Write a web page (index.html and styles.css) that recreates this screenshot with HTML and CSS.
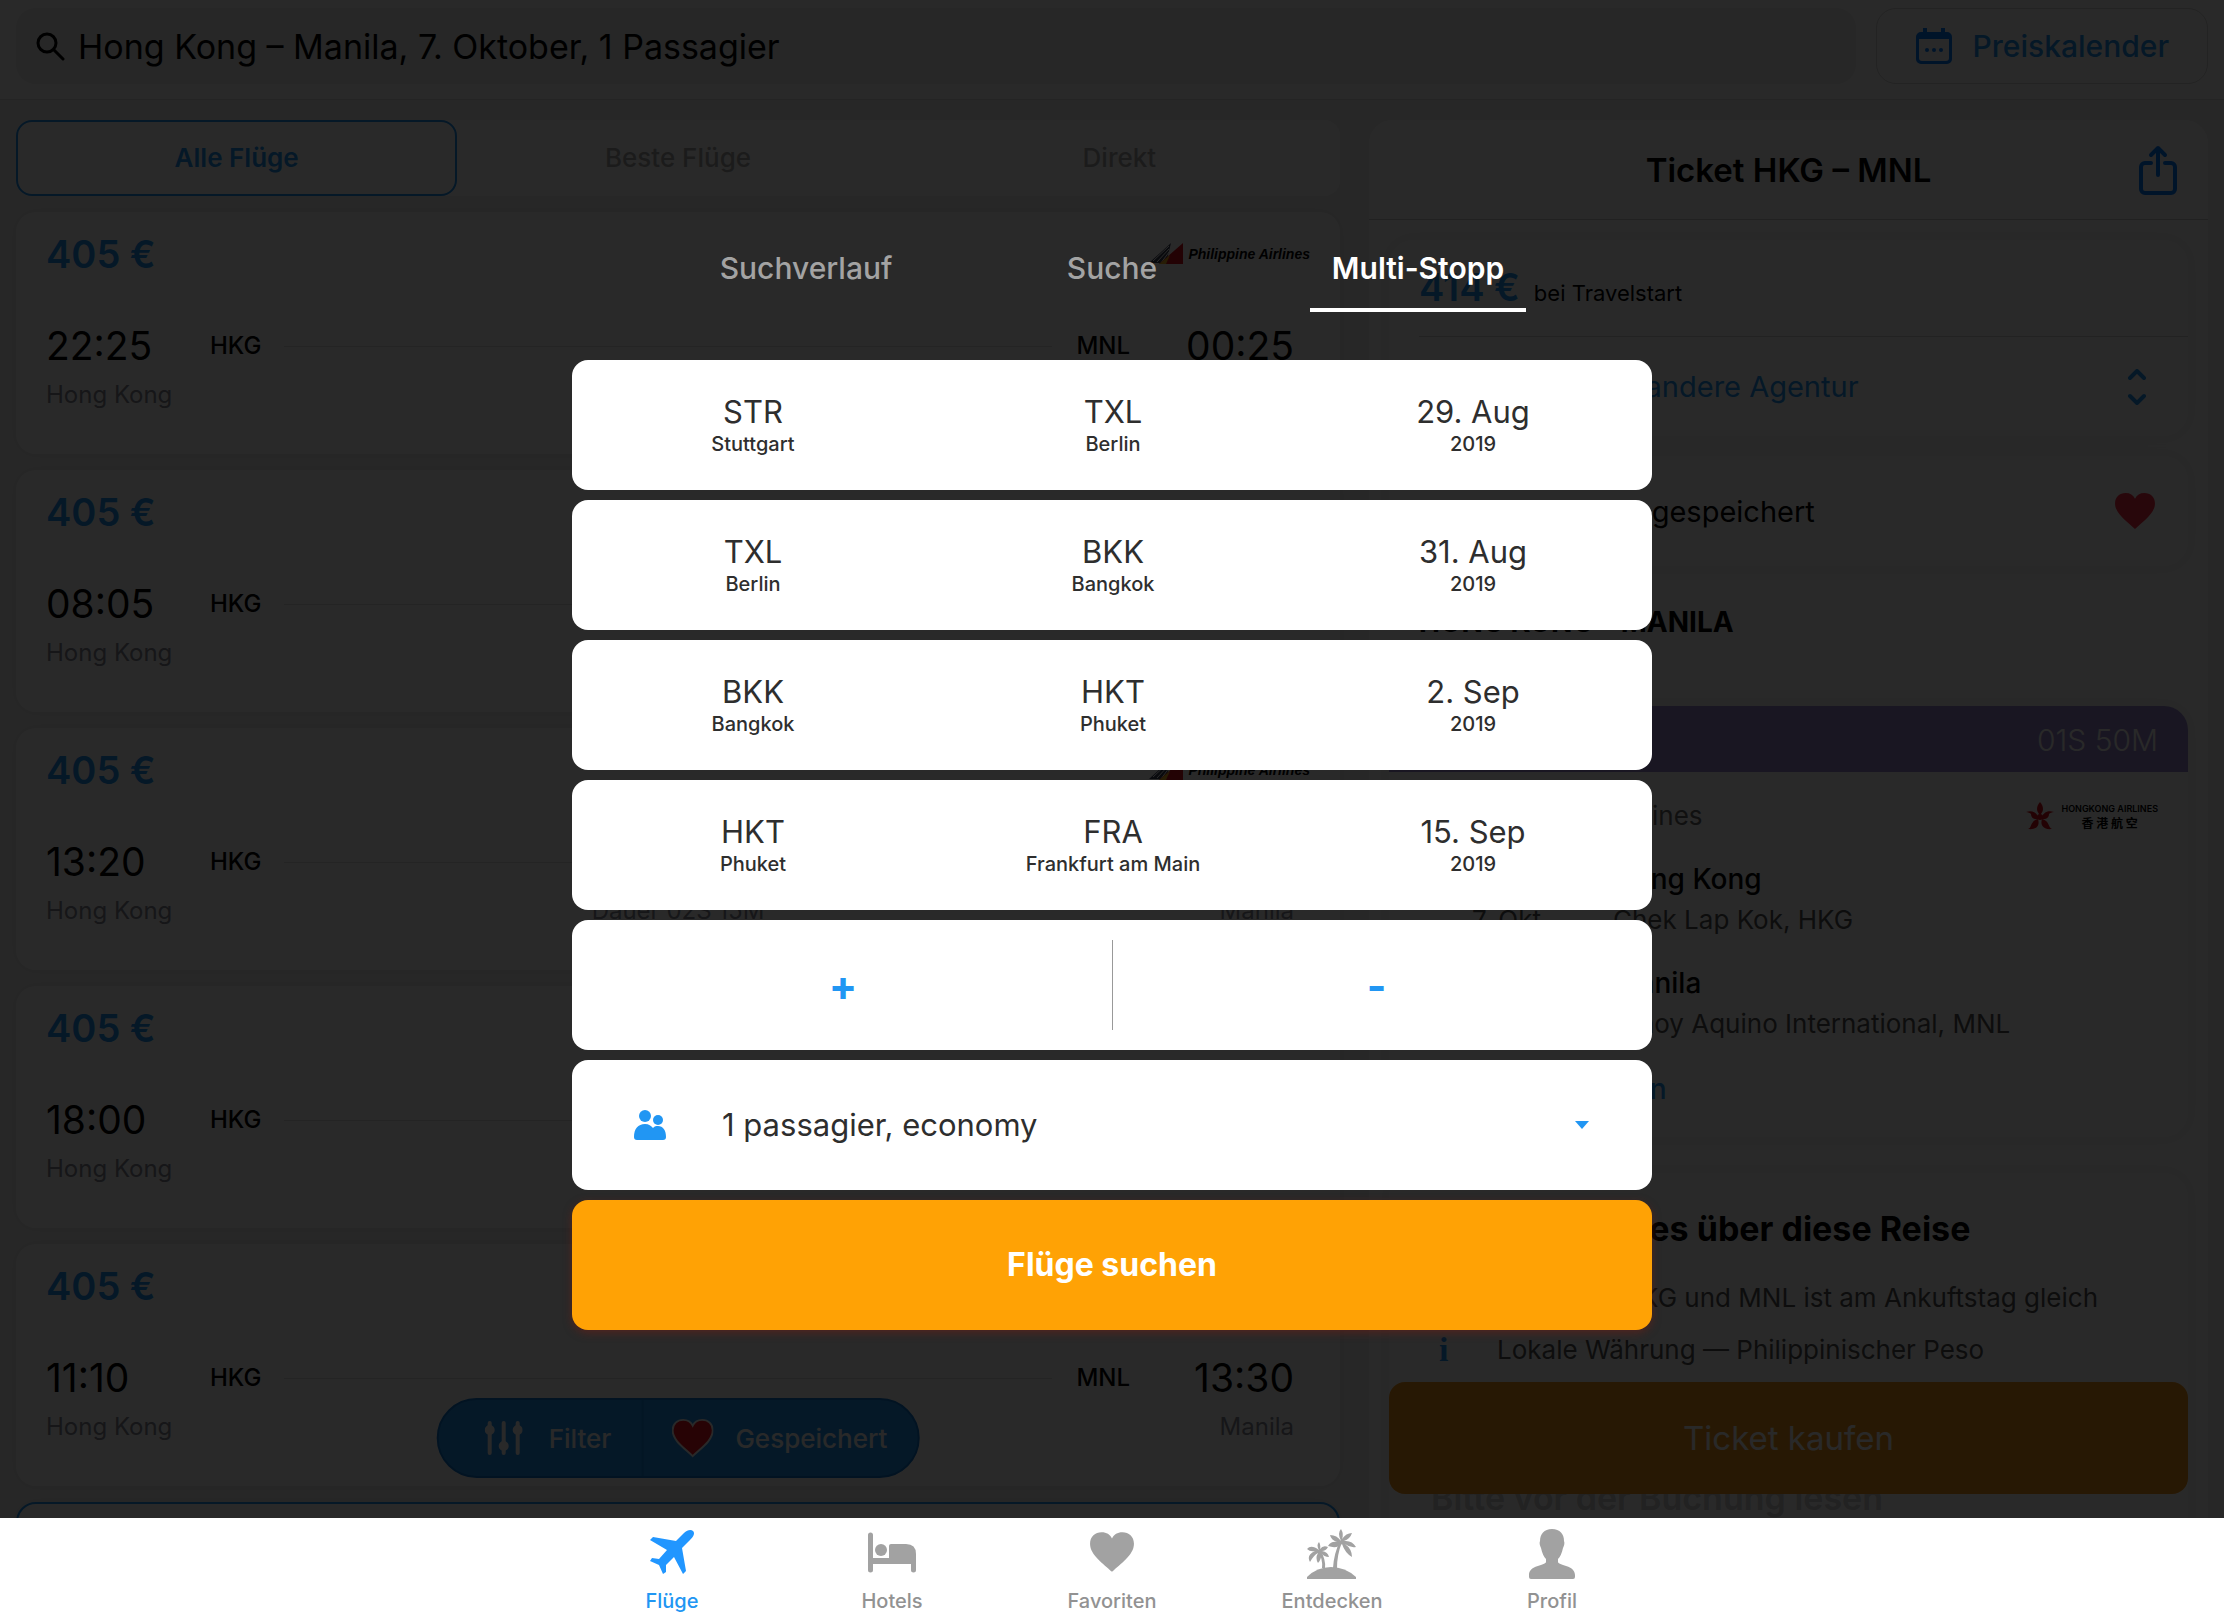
FILE: index.html
```html
<!DOCTYPE html>
<html lang="de">
<head>
  <meta charset="UTF-8" />
  <meta name="viewport" content="width=device-width, initial-scale=1.0"/>
  <title>Flüge suchen</title>
  <link rel="stylesheet" href="styles.css">
</head>
<body>
  <!-- shared shapes -->
  <svg width="0" height="0" class="sprite" aria-hidden="true">
    <symbol id="heart" viewBox="0 0 44 40">
      <path d="M22 39 C14 31 1 23 1 12 C1 5 6 1 12 1 C17 1 20 3 22 7 C24 3 27 1 32 1 C38 1 43 5 43 12 C43 23 30 31 22 39Z"/>
    </symbol>
    <symbol id="pal" viewBox="0 0 36 22">
      <path d="M0 20 L22 0 L17 20Z" fill="#3b3f55"/>
      <path d="M4 18 L20 3 M8 19 L20 6 M12 20 L20 9" stroke="#fff" stroke-width="1"/>
      <path d="M10 21 L34 0 V21Z" fill="#d8121a"/>
      <path d="M10 21 L21 12 L17 21Z" fill="#f0b323"/>
    </symbol>
  </svg>

  <div class="screen">
    <header class="topbar">
      <label class="search" for="search">
        <svg width="30" height="30" viewBox="0 0 30 30" fill="none" stroke="#000" stroke-width="3" stroke-linecap="round"><circle cx="11" cy="12" r="9"/><path d="M18 19 L27 28"/></svg>
        <input type="text" id="search" value="Hong Kong – Manila, 7. Oktober, 1 Passagier" />
      </label>
      <button type="button" class="calendar">
        <svg width="38" height="38" viewBox="0 0 38 38" fill="#007aff"><path fill-rule="evenodd" d="M8 1h4v4h14V1h4v4h2a5 5 0 0 1 5 5v22a5 5 0 0 1-5 5H6a5 5 0 0 1-5-5V10a5 5 0 0 1 5-5h2zM4 12v19a3 3 0 0 0 3 3h24a3 3 0 0 0 3-3V12z"/><circle cx="12" cy="23" r="2"/><circle cx="19" cy="23" r="2"/><circle cx="26" cy="23" r="2"/></svg>
        Preiskalender
      </button>
    </header>

    <main class="content">
      <section class="results">
        <div class="tabs">
          <button type="button" class="tab active">Alle Flüge</button>
          <button type="button" class="tab">Beste Flüge</button>
          <button type="button" class="tab">Direkt</button>
        </div>

        <article class="flight">
          <div class="flight-top">
            <span class="price">405 €</span>
            <span class="airline"><svg width="36" height="22"><use href="#pal"/></svg>Philippine Airlines</span>
          </div>
          <div class="route">
            <span class="time">22:25</span><span class="code">HKG</span><span class="line"></span>
            <span class="code to">MNL</span><span class="time end">00:25</span>
          </div>
          <div class="cities"><span>Hong Kong</span></div>
        </article>

        <article class="flight">
          <div class="flight-top"><span class="price">405 €</span></div>
          <div class="route">
            <span class="time">08:05</span><span class="code">HKG</span><span class="line"></span>
          </div>
          <div class="cities"><span>Hong Kong</span></div>
        </article>

        <article class="flight">
          <div class="flight-top">
            <span class="price">405 €</span>
            <span class="airline"><svg width="36" height="22"><use href="#pal"/></svg>Philippine Airlines</span>
          </div>
          <div class="route">
            <span class="time">13:20</span><span class="code">HKG</span><span class="line"></span>
          </div>
          <div class="cities"><span>Hong Kong</span><span class="duration">Dauer 02S 15M</span><span class="end">Manila</span></div>
        </article>

        <article class="flight">
          <div class="flight-top"><span class="price">405 €</span></div>
          <div class="route">
            <span class="time">18:00</span><span class="code">HKG</span><span class="line"></span>
          </div>
          <div class="cities"><span>Hong Kong</span></div>
        </article>

        <article class="flight">
          <div class="flight-top"><span class="price">405 €</span></div>
          <div class="route">
            <span class="time">11:10</span><span class="code">HKG</span><span class="line"></span>
            <span class="code to">MNL</span><span class="time end">13:30</span>
          </div>
          <div class="cities"><span>Hong Kong</span><span></span><span class="end">Manila</span></div>
        </article>

        <article class="flight selected"></article>

        <div class="pill">
          <button type="button" class="pill-filter">
            <svg width="38" height="34" viewBox="0 0 38 34" stroke="#fff" stroke-width="4" stroke-linecap="round" fill="#fff"><path d="M5 2v30M19 2v30M33 2v30"/><circle cx="5" cy="9" r="3"/><circle cx="19" cy="25" r="3"/><circle cx="33" cy="9" r="3"/></svg>
            Filter
          </button>
          <button type="button" class="pill-saved">
            <svg class="heart-outline" width="42" height="40"><use href="#heart"/></svg>
            Gespeichert
          </button>
        </div>
      </section>

      <section class="ticket">
        <div class="ticket-head">
          <h2>Ticket HKG – MNL</h2>
          <button type="button" class="share" aria-label="Teilen">
            <svg width="38" height="50" viewBox="0 0 38 50" fill="none" stroke="#007aff" stroke-width="4" stroke-linecap="round" stroke-linejoin="round"><path d="M12 18H6a4 4 0 0 0-4 4v22a4 4 0 0 0 4 4h26a4 4 0 0 0 4-4V22a4 4 0 0 0-4-4h-6M19 30V4M12 10l7-7 7 7"/></svg>
          </button>
        </div>

        <div class="ticket-body">
          <div class="box">
            <div class="offer"><span class="price">414 €</span> <span class="seller">bei Travelstart</span></div>
            <div class="agency">
              <a href="#">Wählen Sie eine andere Agentur</a>
              <svg width="22" height="36" viewBox="0 0 22 36" fill="none" stroke="#2196f3" stroke-width="4" stroke-linecap="round" stroke-linejoin="round"><path d="M4 9l7-7 7 7M4 27l7 7 7-7"/></svg>
            </div>
          </div>

          <div class="box saved">
            <span>Dieses Ticket ist gespeichert</span>
            <svg class="heart" width="42" height="38"><use href="#heart"/></svg>
          </div>

          <h3 class="direction">HONG KONG – MANILA</h3>

          <div class="box trip">
            <div class="trip-head">01S 50M</div>
            <div class="trip-airline">
              <span>Hongkong Airlines</span>
              <span class="hk-logo">
                <svg width="28" height="28" viewBox="0 0 28 28"><g fill="#d8121a"><path d="M14 0c4 5 4 9 0 13c-4-4-4-8 0-13z"/><path d="M0 10c6-2 11 0 13 7c-6 1-8-2-8-5c-1-1-3-2-5-2z"/><path d="M28 10c-6-2-11 0-13 7c6 1 8-2 8-5c1-1 3-2 5-2z"/><path d="M2 27c4-1 2-8 10-10c2 6-1 11-10 10z"/><path d="M26 27c-4-1-2-8-10-10c-2 6 1 11 10 10z"/><circle cx="14" cy="15" r="3"/></g></svg>
                <span class="hk-name">HONGKONG AIRLINES<span lang="zh">香 港 航 空</span></span>
              </span>
            </div>
            <div class="stop">
              <span></span><strong>Hong Kong</strong>
              <span class="date">7. Okt</span><span>Chek Lap Kok, HKG</span>
            </div>
            <div class="stop">
              <span></span><strong>Manila</strong>
              <span></span><span>Ninoy Aquino International, MNL</span>
            </div>
            <a href="#" class="more">Details einblenden</a>
          </div>

          <div class="box facts">
            <h2>Wissenswertes über diese Reise</h2>
            <p>Uhrzeit in HKG und MNL ist am Ankuftstag gleich</p>
            <p><i>i</i>Lokale Währung — Philippinischer Peso</p>
            <h2 class="notice">Bitte vor der Buchung lesen</h2>
          </div>
        </div>

        <button type="button" class="buy">Ticket kaufen</button>
      </section>
    </main>

    <div class="overlay">
      <form class="dialog">
        <div class="dialog-tabs">
          <button type="button">Suchverlauf</button>
          <button type="button">Suche</button>
          <button type="button" class="active">Multi-Stopp</button>
        </div>

        <div class="leg">
          <button type="button">STR<small>Stuttgart</small></button>
          <button type="button">TXL<small>Berlin</small></button>
          <button type="button">29. Aug<small>2019</small></button>
        </div>
        <div class="leg">
          <button type="button">TXL<small>Berlin</small></button>
          <button type="button">BKK<small>Bangkok</small></button>
          <button type="button">31. Aug<small>2019</small></button>
        </div>
        <div class="leg">
          <button type="button">BKK<small>Bangkok</small></button>
          <button type="button">HKT<small>Phuket</small></button>
          <button type="button">2. Sep<small>2019</small></button>
        </div>
        <div class="leg">
          <button type="button">HKT<small>Phuket</small></button>
          <button type="button">FRA<small>Frankfurt am Main</small></button>
          <button type="button">15. Sep<small>2019</small></button>
        </div>

        <div class="leg count">
          <button type="button">+</button>
          <button type="button">-</button>
        </div>

        <label class="leg passengers" for="passengers">
          <svg width="32" height="32" viewBox="0 0 32 32" fill="#2196f3"><circle cx="11" cy="7" r="6"/><circle cx="24" cy="11" r="5"/><path d="M0 28c0-8 4-13 11-13c4 0 6 2 8 4c2-2 3-2 5-2c5 0 8 4 8 11c0 2-1 3-3 3H3c-2 0-3-1-3-3z"/></svg>
          <select id="passengers">
            <option>1 passagier, economy</option>
          </select>
          <svg width="14" height="8" viewBox="0 0 14 8" fill="#2196f3"><path d="M0 0h14L7 8z"/></svg>
        </label>

        <button type="submit" class="submit">Flüge suchen</button>
      </form>
    </div>
  </div>

  <nav class="bottom">
    <a href="#" class="active">
      <svg width="46" height="46" viewBox="0 0 46 46"><path d="M44 2C42 0 38 1 35 4L27 12L4 8L1 11L18 21L10 30L3 29L1 32L10 36L14 45L17 43L17 36L25 28L34 45L37 42L33 19L41 11C45 7 46 4 44 2Z"/></svg>
      Flüge
    </a>
    <a href="#">
      <svg width="48" height="46" viewBox="0 0 48 46"><path d="M0 6a2 2 0 0 1 5 0V29H21V17q0-2 2-2H38q10 0 10 10V41a2 2 0 0 1-5 0V35H5v6a2 2 0 0 1-5 0z"/><circle cx="13" cy="21" r="6"/></svg>
      Hotels
    </a>
    <a href="#">
      <svg width="46" height="46" viewBox="0 0 46 46"><use href="#heart" y="2" width="46" height="42"/></svg>
      Favoriten
    </a>
    <a href="#">
      <svg width="50" height="50" viewBox="0 0 50 50"><path d="M0 48Q10 38 24 38Q38 38 49 48V50H0Z"/><path d="M15 39Q16 30 11 22L13 21Q19 30 18 39ZM26 39Q27 24 33 12L35 13Q30 26 30 39Z"/><path d="M34 12Q30 4 34 0Q37 5 35 10Q39 4 45 4Q43 10 37 12Q45 11 49 18Q43 19 38 15Q45 20 45 28Q38 24 35 15Q30 20 21 17Q24 12 30 13Q24 11 23 6Q30 6 34 12Z"/><path d="M12 21Q9 16 12 13Q14 16 13 20Q16 16 21 18Q19 22 15 22Q21 23 22 28Q17 28 14 24Q15 30 11 34Q8 29 11 24Q7 26 3 33Q-1 26 8 22Q3 23 0 20Q4 15 12 21Z"/></svg>
      Entdecken
    </a>
    <a href="#">
      <svg width="46" height="50" viewBox="0 0 46 50"><path d="M23 0C31 0 35 5 35 12C36 14 35 17 34 19C33 24 31 28 29 30V33C30 37 46 36 46 46V48Q46 50 44 50H2Q0 50 0 48V46C0 36 16 37 17 33V30C15 28 13 24 12 19C11 17 10 14 11 12C11 5 15 0 23 0Z"/></svg>
      Profil
    </a>
  </nav>
</body>
</html>
```

FILE: styles.css
```css
* {
  box-sizing: border-box;
}
body {
  display: flex;
  flex-direction: column;
  height: 100vh;
  margin: 0;
  font-family: Inter, "Noto Sans", sans-serif;
  font-size: 28px;
  color: #000;
  overflow: hidden;
}
button,
input,
select {
  font: inherit;
  color: inherit;
  background: none;
  border: none;
  padding: 0;
  margin: 0;
}
button {
  cursor: pointer;
}
a {
  color: #2196f3;
  text-decoration: none;
}
h2,
h3,
p {
  margin: 0;
}
.sprite {
  position: absolute;
}
.screen {
  position: relative;
  flex: 1;
  min-height: 0;
  display: flex;
  flex-direction: column;
  background: #f3f3f3;
  overflow: hidden;
}

/* top bar */
.topbar {
  display: flex;
  gap: 20px;
  padding: 8px 16px 15px;
  background: #fff;
  border-bottom: 1px solid #ddd;
}
.search {
  flex: 1;
  display: flex;
  align-items: center;
  gap: 12px;
  height: 76px;
  padding: 0 20px;
  border-radius: 20px;
  background: #eee;
}
.search input {
  flex: 1;
  font-size: 34px;
  outline: none;
}
.calendar {
  display: flex;
  align-items: center;
  gap: 20px;
  padding: 0 38px;
  border: 1px solid #d6d6d6;
  border-radius: 20px;
  color: #2196f3;
  font-weight: 500;
  font-size: 30px;
}

/* list of flights */
.content {
  flex: 1;
  min-height: 0;
  display: grid;
  grid-template-columns: 1324fr 839fr;
  gap: 29px;
  padding: 20px 16px 0;
}
.results {
  position: relative;
  display: flex;
  flex-direction: column;
  gap: 16px;
  min-height: 0;
}
.tabs {
  display: grid;
  grid-template-columns: repeat(3, 1fr);
  flex: none;
  height: 76px;
  background: #fff;
  border-radius: 16px;
}
.tab {
  padding-bottom: 2px;
  font-size: 26px;
  font-weight: 500;
  color: #aaa;
}
.tab.active {
  border: 2px solid #2196f3;
  border-radius: 16px;
  color: #2196f3;
  font-weight: 600;
}
.flight {
  flex: none;
  padding: 18px 30px 44px;
  border-radius: 20px;
  background: #fff;
  box-shadow: 0 0 14px rgba(0,0,0,0.08);
}
.flight.selected {
  height: 242px;
  border: 2px solid #2196f3;
}
.flight-top {
  display: flex;
  justify-content: space-between;
  align-items: center;
  margin-bottom: 44px;
}
.price {
  font-size: 38px;
  line-height: 48px;
  font-weight: 600;
  color: #2196f3;
}
.airline {
  display: flex;
  align-items: center;
  gap: 3px;
  font: italic bold 14px "Liberation Sans", sans-serif;
}
.route {
  display: flex;
  align-items: center;
  margin-bottom: 10px;
  padding-right: 16px;
  line-height: 48px;
}
.time {
  width: 164px;
  font-size: 39px;
}
.end {
  text-align: right;
}
.code {
  width: 74px;
  font-size: 24px;
  font-weight: 500;
}
.code.to {
  width: auto;
  margin-left: 24px;
}
.line {
  flex: 1;
  height: 1px;
  background: #ddd;
}
.cities {
  display: grid;
  grid-template-columns: 1fr 1fr 1fr;
  font-size: 24px;
  line-height: 30px;
  color: #878a96;
}
.cities .end {
  padding-right: 16px;
}
.duration {
  text-align: center;
}
.pill {
  position: absolute;
  left: 50%;
  bottom: 40px;
  transform: translateX(-50%);
  display: flex;
  height: 80px;
  border: 2px solid #0f76d0;
  border-radius: 40px;
  background: #2196f3;
  color: #fff;
  font-weight: 500;
  font-size: 26px;
}
.pill button {
  display: flex;
  align-items: center;
  gap: 26px;
  padding: 0 30px 0 28px;
}
.pill .pill-filter {
  padding-left: 46px;
  border-right: 2px solid #1687e0;
}
.pill .pill-saved {
  gap: 22px;
}
.heart {
  fill: #f52d45;
}
.heart-outline {
  fill: #f01822;
  stroke: #fff;
  stroke-width: 2;
}

/* ticket */
.ticket {
  position: relative;
  min-height: 0;
  border-radius: 24px 24px 0 0;
  background: #fcfcfc;
  overflow: hidden;
}
.ticket-head {
  display: grid;
  grid-template-columns: 1fr auto 1fr;
  align-items: center;
  height: 100px;
  padding: 0 31px;
  background: #fff;
  border-bottom: 1px solid #ccc;
}
.ticket-head h2 {
  grid-column: 2;
  font-size: 33px;
  font-weight: 600;
}
.share {
  justify-self: end;
  display: flex;
}
.ticket-body {
  padding: 20px 20px 0;
}
.box {
  margin-bottom: 20px;
  border-radius: 24px;
  background: #fff;
  box-shadow: 0 0 16px rgba(0,0,0,0.07);
}
.offer {
  display: flex;
  align-items: baseline;
  gap: 14px;
  height: 97px;
  margin-left: 30px;
  padding-top: 23px;
  border-bottom: 1px solid #d4d4d4;
}
.seller {
  font-size: 22px;
}
.agency,
.saved {
  display: flex;
  align-items: center;
  justify-content: space-between;
  height: 99px;
  padding: 0 40px 0 30px;
  font-size: 29px;
}
.saved {
  height: 110px;
  padding-right: 32px;
}
.direction {
  margin: 38px 30px 66px;
  font-size: 28px;
  line-height: 36px;
}
.trip {
  margin-bottom: 36px;
  padding-bottom: 30px;
  line-height: 36px;
  overflow: hidden;
}
.trip-head {
  height: 66px;
  padding-right: 30px;
  line-height: 68px;
  text-align: right;
  color: #fff;
  font-size: 30px;
  font-weight: 300;
  background: #9a8ad0;
}
.trip-airline {
  display: flex;
  justify-content: space-between;
  padding: 26px 30px 0 88px;
  font-size: 26px;
  color: #666;
}
.hk-logo {
  display: flex;
  align-items: center;
  gap: 7px;
}
.hk-name {
  display: flex;
  flex-direction: column;
  align-items: center;
  gap: 3px;
  font-size: 9px;
  font-weight: 600;
  line-height: 10px;
  color: #000;
}
.hk-name span {
  font-family: "Noto Sans CJK TC", sans-serif;
  font-size: 12px;
  line-height: 12px;
}
.stop {
  display: grid;
  grid-template-columns: 141px 1fr;
  row-gap: 5px;
  margin: 27px 0 0 83px;
  font-size: 26px;
  color: #555;
}
.stop strong {
  font-size: 28px;
  font-weight: 500;
  color: #000;
}
.more {
  display: block;
  margin: 29px 0 0 30px;
  font-weight: 500;
}
.facts {
  padding: 36px 42px 80px;
}
.facts h2 {
  margin-bottom: 31px;
  font-size: 34px;
  line-height: 40px;
}
.facts p {
  display: flex;
  margin-bottom: 16px;
  padding-left: 66px;
  font-size: 26px;
  line-height: 36px;
  color: #555;
}
.facts i {
  width: 58px;
  margin-left: -58px;
  font: bold 34px/36px "Liberation Serif", serif;
  color: #2196f3;
}
.facts .notice {
  margin-top: 110px;
  font-weight: 600;
  color: #d0d0d0;
}
.buy {
  position: absolute;
  left: 20px;
  right: 20px;
  bottom: 24px;
  height: 112px;
  border-radius: 16px;
  background: #f39619;
  color: #fff;
  font-size: 33px;
}

/* search dialog */
.overlay {
  position: absolute;
  inset: 0;
  display: flex;
  justify-content: center;
  align-items: flex-start;
  padding-top: 224px;
  background: rgba(0,0,0,0.84);
}
.dialog {
  display: flex;
  flex-direction: column;
  gap: 10px;
  width: 1080px;
  max-width: 100%;
}
.dialog-tabs {
  display: grid;
  grid-template-columns: repeat(3, 216px);
  justify-content: center;
  gap: 90px;
  height: 88px;
  margin-bottom: 38px;
  font-size: 30px;
  font-weight: 500;
}
.dialog-tabs button {
  padding-top: 3px;
  border-bottom: 4px solid transparent;
  color: #a3a3a3;
}
.dialog-tabs .active {
  border-color: #fff;
  color: #fff;
  font-weight: 600;
}
.leg {
  display: grid;
  grid-template-columns: repeat(3, 1fr);
  height: 130px;
  border-radius: 16px;
  background: #fff;
  color: #2e2e2e;
}
.leg button {
  padding: 2px 0 0 2px;
  font-size: 31px;
  line-height: 36px;
}
.leg small {
  display: block;
  font-size: 20px;
  font-weight: 500;
  line-height: 28px;
}
.count {
  grid-template-columns: 1fr 1fr;
}
.leg.count button {
  color: #2196f3;
  font-size: 42px;
  font-weight: 700;
}
.leg.count button + button {
  margin: 20px 0;
  padding-right: 14px;
  border-left: 1px solid #999;
}
.leg.passengers {
  display: flex;
  align-items: center;
  padding: 0 63px 0 62px;
}
.passengers select {
  flex: 1;
  margin-left: 56px;
  padding-bottom: 2px;
  appearance: none;
  font-size: 31px;
  outline: none;
}
.submit {
  height: 130px;
  padding-bottom: 2px;
  border-radius: 16px;
  background: #ffa205;
  box-shadow: 0 3px 8px rgba(120,30,20,0.5);
  color: #fff;
  font-size: 32px;
  font-weight: 700;
}

/* bottom navigation */
.bottom {
  flex: none;
  display: grid;
  grid-template-columns: repeat(5, 220px);
  justify-content: center;
  height: 100px;
  background: #fff;
}
.bottom a {
  display: flex;
  flex-direction: column;
  align-items: center;
  justify-content: space-between;
  padding: 11px 0 4px;
  font-size: 20px;
  line-height: 26px;
  font-weight: 500;
  color: #929292;
}
.bottom svg {
  fill: #a2a2a2;
}
.bottom .active {
  color: #2196f3;
}
.bottom .active svg {
  fill: #2196ff;
}
```
